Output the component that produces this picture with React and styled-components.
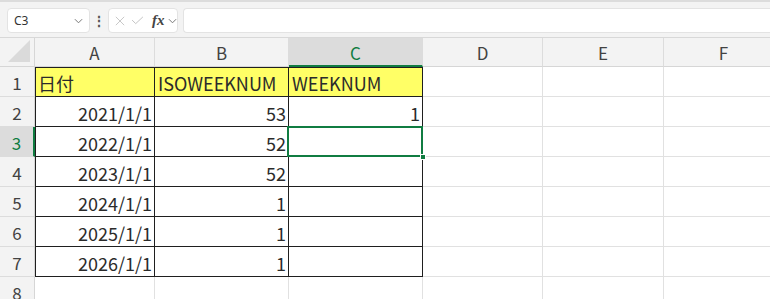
import styled, { createGlobalStyle, css } from "styled-components";

const GlobalStyle = createGlobalStyle`
  html, body {
    margin: 0;
    padding: 0;
    background: #ffffff;
    overflow: hidden;
  }
  body {
    font-family: "Noto Sans CJK JP", "Noto Sans", sans-serif;
  }
`;

const GREEN = "#107c41";
const GRID = "#e1e1e1";
const INK = "#1f1f1f";

const columns = [
  { key: "A", width: 120 },
  { key: "B", width: 134 },
  { key: "C", width: 134 },
  { key: "D", width: 120 },
  { key: "E", width: 121 },
  { key: "F", width: 120 },
];

const rows = [
  ["日付", "ISOWEEKNUM", "WEEKNUM"],
  ["2021/1/1", "53", "1"],
  ["2022/1/1", "52", ""],
  ["2023/1/1", "52", ""],
  ["2024/1/1", "1", ""],
  ["2025/1/1", "1", ""],
  ["2026/1/1", "1", ""],
  null,
];

const activeCol = 2;
const activeRow = 3;

export default function App() {
  return (
    <Page>
      <GlobalStyle />
      <FormulaBar>
        <NameBox>
          <span>C3</span>
          <Chevron />
        </NameBox>
        <Dots>⋮</Dots>
        <FxGroup>
          <CancelIcon />
          <CheckIcon />
          <Fx>fx</Fx>
          <Chevron />
        </FxGroup>
        <FormulaInput />
      </FormulaBar>

      <Sheet>
        <Corner>
          <CornerTriangle />
        </Corner>
        {columns.map((c, i) => (
          <ColHead key={c.key} $active={i === activeCol}>
            {c.key}
          </ColHead>
        ))}
        <Filler />

        {rows.map((r, ri) => {
          const n = ri + 1;
          return [
            <RowHead key={`h${n}`} $active={n === activeRow}>
              {n}
            </RowHead>,
            ...columns.map((c, ci) => {
              const inTable = r && ci < 3;
              const value = inTable ? r[ci] : "";
              const isHeader = inTable && n === 1;
              return (
                <Cell
                  key={`${c.key}${n}`}
                  $table={inTable}
                  $header={isHeader}
                  $left={inTable && ci === 0}
                  $top={inTable && n === 1}
                  $align={isHeader ? "left" : "right"}
                  $selected={n === activeRow && ci === activeCol}
                >
                  {value}
                </Cell>
              );
            }),
            <Filler key={`f${n}`} $row />,
          ];
        })}
      </Sheet>
    </Page>
  );
}

function Chevron() {
  return (
    <ChevronSvg viewBox="0 0 10 6">
      <path d="M1 1 L5 5 L9 1" fill="none" stroke="#777" strokeWidth="1.1" />
    </ChevronSvg>
  );
}

function CancelIcon() {
  return (
    <IconSvg viewBox="0 0 12 12">
      <path d="M1 1 L11 11 M11 1 L1 11" stroke="#bdbdbd" strokeWidth="1" fill="none" />
    </IconSvg>
  );
}

function CheckIcon() {
  return (
    <IconSvg viewBox="0 0 14 10" $wide>
      <path d="M1 4.5 L5 8.5 L13 1" stroke="#bdbdbd" strokeWidth="1" fill="none" />
    </IconSvg>
  );
}

const Page = styled.div`
  width: 770px;
  height: 299px;
  display: flex;
  flex-direction: column;
  overflow: hidden;
`;

const FormulaBar = styled.div`
  flex-shrink: 0;
  height: 38px;
  box-sizing: border-box;
  background: #f3f3f3;
  border-top: 2px solid #dcdcdc;
  border-bottom: 1px solid #d8d8d8;
  display: flex;
  align-items: flex-start;
  padding: 6px 0 0 7px;
`;

const Box = styled.div`
  height: 25px;
  box-sizing: border-box;
  background: #ffffff;
  border: 1px solid #e3e3e3;
  border-radius: 4px;
  display: flex;
  align-items: center;
`;

const NameBox = styled(Box)`
  width: 83px;
  padding: 0 6px 0 6px;
  justify-content: space-between;
  font-family: "Noto Sans", sans-serif;
  font-size: 12px;
  color: #333;
`;

const Dots = styled.div`
  width: 18px;
  text-align: center;
  font-size: 14px;
  line-height: 25px;
  color: #555;
  font-weight: bold;
`;

const FxGroup = styled(Box)`
  width: 70px;
  padding: 0 2px 0 6px;
  gap: 6px;
`;

const Fx = styled.span`
  font-family: "Liberation Serif", serif;
  font-style: italic;
  font-weight: bold;
  font-size: 15px;
  color: #444;
  margin-left: 2px;
  margin-right: -3px;
  line-height: 1;
`;

const FormulaInput = styled(Box)`
  flex: 1;
  margin-left: 5px;
  border-right: none;
  border-radius: 4px 0 0 4px;
`;

const ChevronSvg = styled.svg`
  width: 9px;
  height: 6px;
  flex-shrink: 0;
`;

const IconSvg = styled.svg`
  width: ${(p) => (p.$wide ? "13px" : "10px")};
  height: ${(p) => (p.$wide ? "9px" : "10px")};
  flex-shrink: 0;
`;

const Sheet = styled.div`
  flex-shrink: 0;
  display: grid;
  grid-template-columns: 35px ${columns.map((c) => `${c.width}px`).join(" ")} 1fr;
  grid-template-rows: 29px repeat(8, 30px);
  font-family: "Noto Sans CJK JP", "Noto Sans", sans-serif;
`;

const headBase = css`
  box-sizing: border-box;
  background: #f3f3f3;
  color: #424242;
  font-size: 17px;
  display: flex;
  align-items: center;
  justify-content: center;
`;

const Corner = styled.div`
  ${headBase};
  position: relative;
  border-right: 1px solid #d6d6d6;
  border-bottom: 1px solid #d6d6d6;
`;

const CornerTriangle = styled.div`
  position: absolute;
  right: 4px;
  bottom: 4px;
  width: 0;
  height: 0;
  border-left: 22px solid transparent;
  border-bottom: 22px solid #dadada;
`;

const ColHead = styled.div`
  ${headBase};
  border-right: 1px solid #dcdcdc;
  border-bottom: ${(p) => (p.$active ? `2px solid ${GREEN}` : "1px solid #d6d6d6")};
  background: ${(p) => (p.$active ? "#dcdcdc" : "#f3f3f3")};
  color: ${(p) => (p.$active ? GREEN : "#424242")};
  padding-top: ${(p) => (p.$active ? "1px" : "0")};
`;

const RowHead = styled.div`
  ${headBase};
  border-bottom: 1px solid #dcdcdc;
  border-right: ${(p) => (p.$active ? `2px solid ${GREEN}` : "1px solid #d6d6d6")};
  background: ${(p) => (p.$active ? "#dcdcdc" : "#f3f3f3")};
  color: ${(p) => (p.$active ? GREEN : "#424242")};
  padding-top: 2px;
`;

const Filler = styled.div`
  box-sizing: border-box;
  background: ${(p) => (p.$row ? "#fff" : "#f3f3f3")};
  border-bottom: 1px solid ${(p) => (p.$row ? GRID : "#d6d6d6")};
`;

const Cell = styled.div`
  position: relative;
  box-sizing: border-box;
  background: ${(p) => (p.$header ? "#ffff66" : "#ffffff")};
  border-right: 1px solid ${(p) => (p.$table ? INK : GRID)};
  border-bottom: 1px solid ${(p) => (p.$table ? INK : GRID)};
  box-shadow: ${(p) =>
    [p.$left && `inset 1px 0 0 ${INK}`, p.$top && `inset 0 1px 0 ${INK}`]
      .filter(Boolean)
      .join(", ") || "none"};
  color: #2b2b2b;
  font-size: 18px;
  display: flex;
  align-items: center;
  justify-content: ${(p) => (p.$align === "left" ? "flex-start" : "flex-end")};
  padding: 2px 2px 0 3px;
  white-space: nowrap;

  ${(p) =>
    p.$selected &&
    css`
      &::after {
        content: "";
        position: absolute;
        left: -2px;
        top: -1px;
        right: -1px;
        bottom: -1px;
        border: 2px solid ${GREEN};
        pointer-events: none;
      }
      &::before {
        content: "";
        position: absolute;
        right: -4px;
        bottom: -4px;
        width: 6px;
        height: 6px;
        background: ${GREEN};
        border: 1px solid #fff;
        box-sizing: border-box;
        z-index: 2;
      }
    `}
`;
